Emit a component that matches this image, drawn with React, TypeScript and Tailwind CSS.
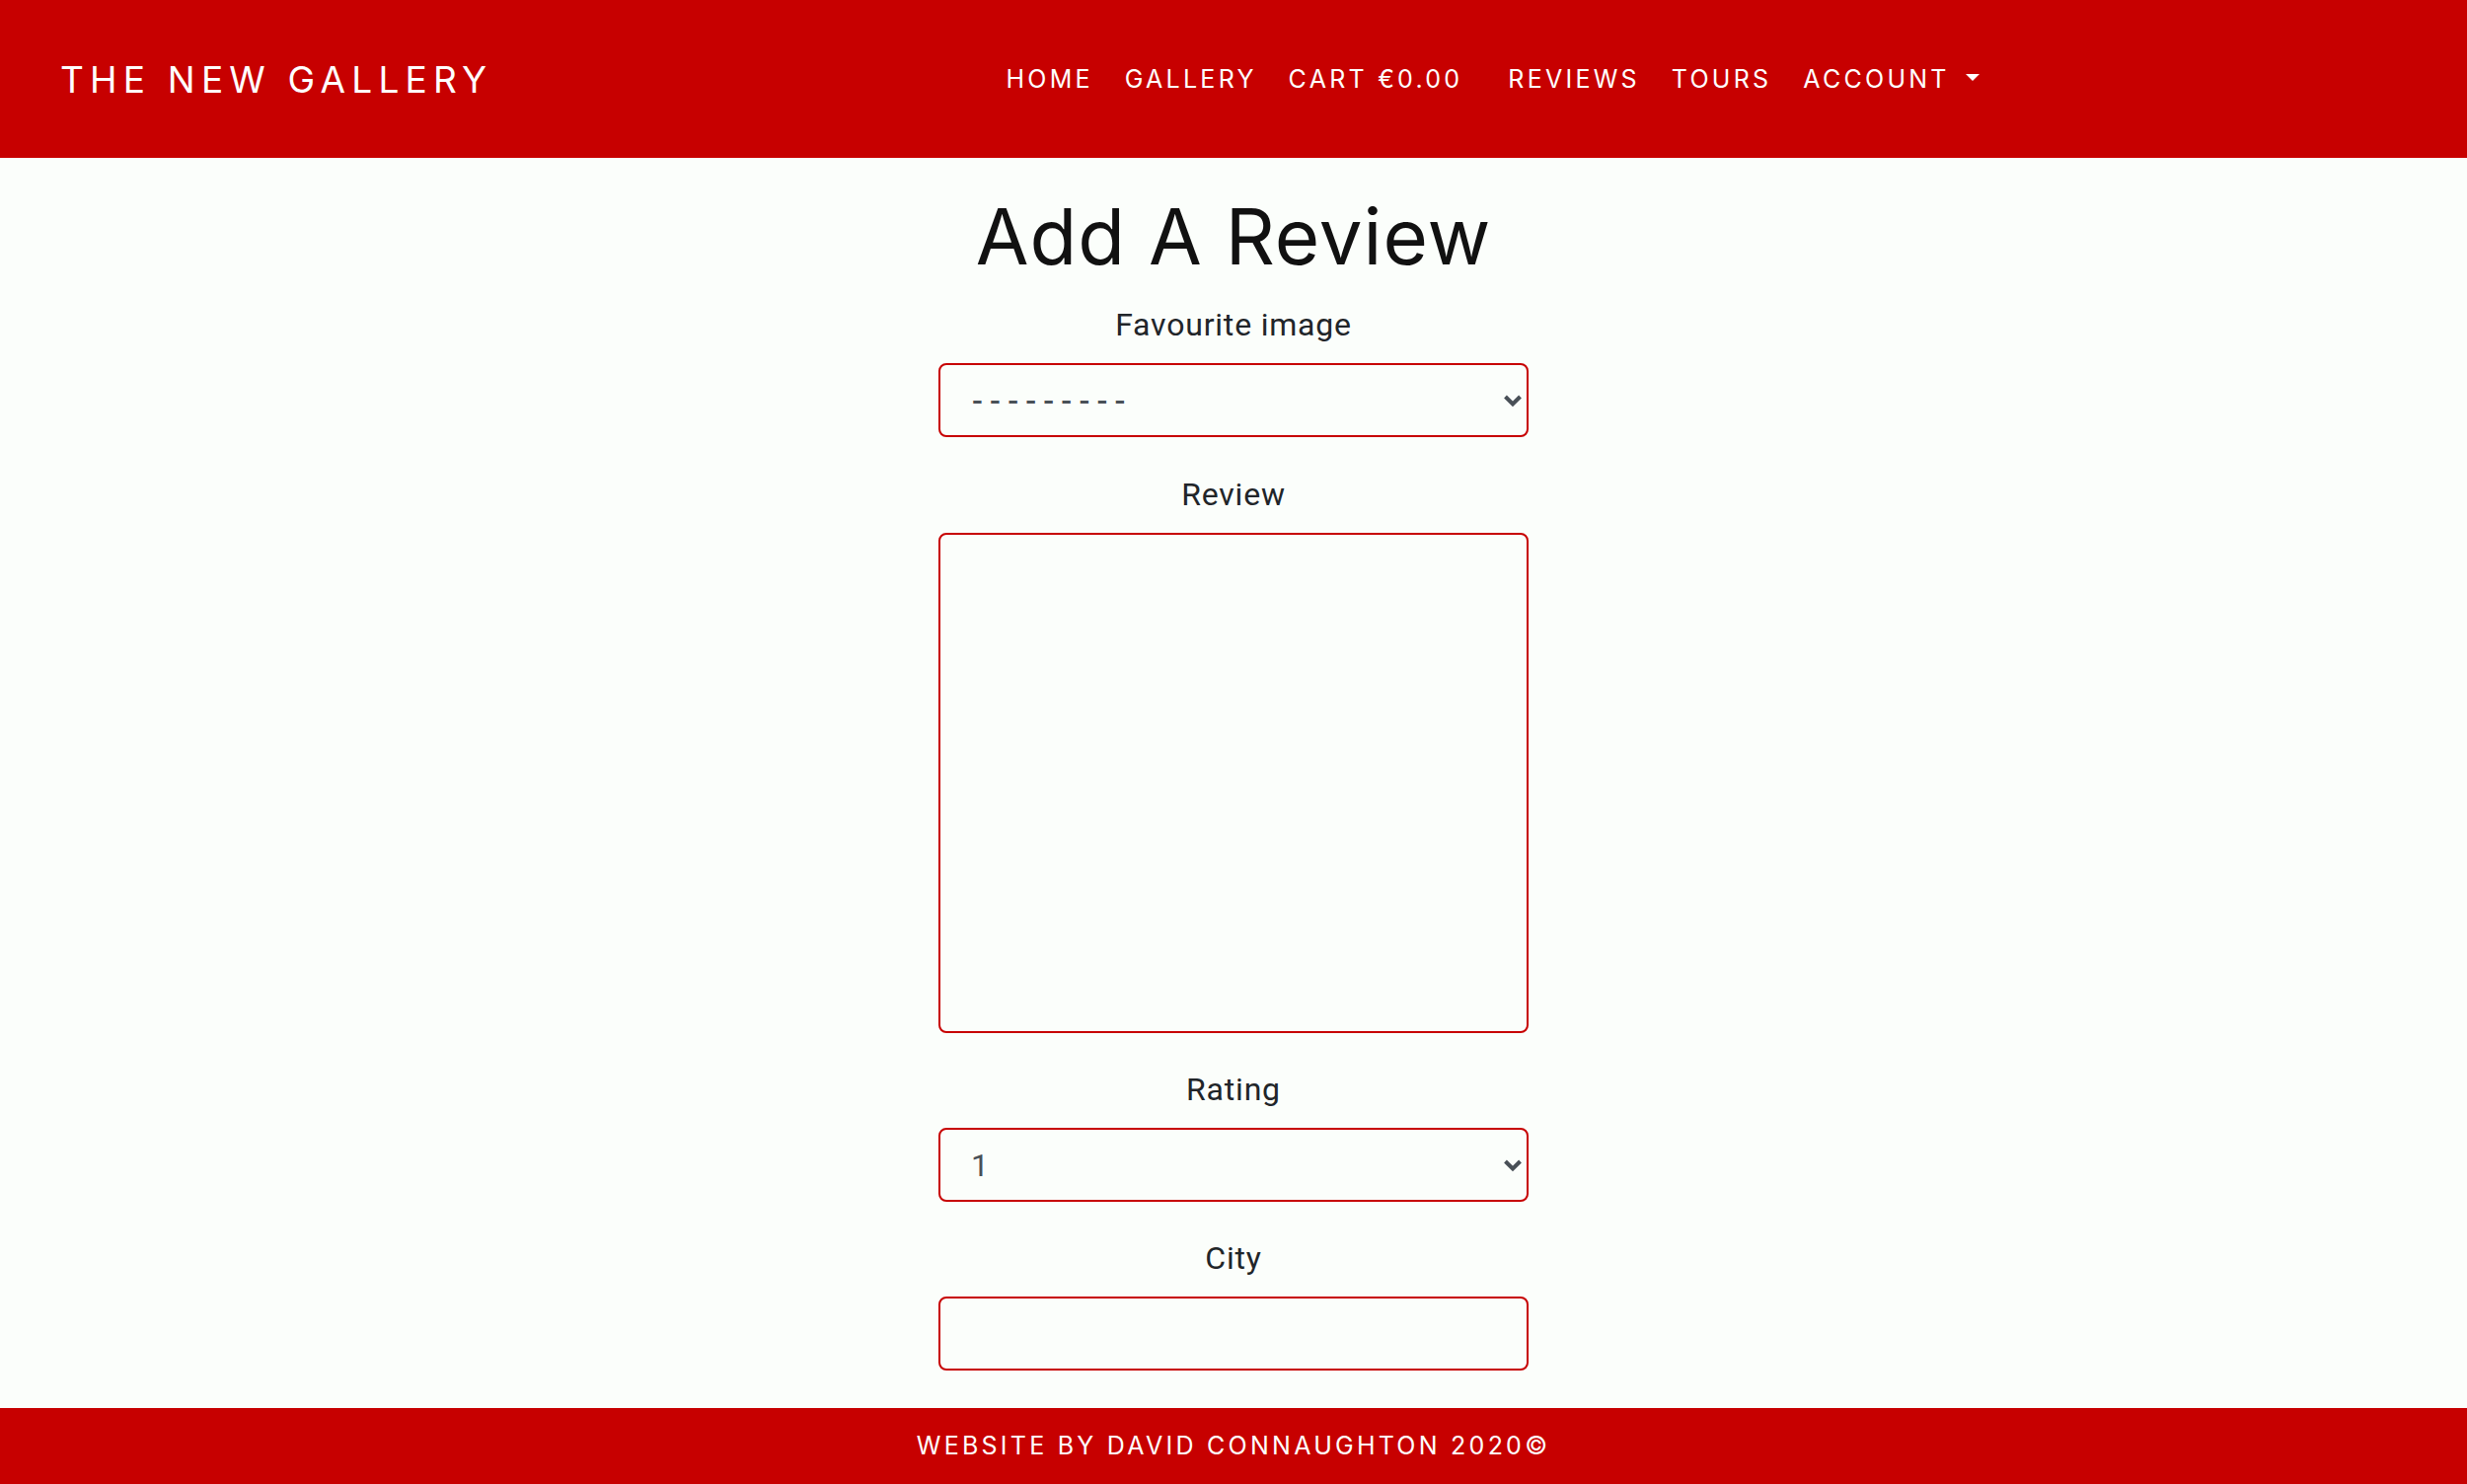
import React from "react";

const Chevron = () => (
  <svg
    className="pointer-events-none absolute right-[6px] top-1/2 -translate-y-1/2"
    width="20"
    height="14"
    viewBox="0 0 20 14"
  >
    <path d="M2.5 3 L10 10.5 L17.5 3" fill="none" stroke="#495057" strokeWidth="4" strokeLinecap="butt" strokeLinejoin="miter" />
  </svg>
);

const navItems = ["HOME", "GALLERY", "CART €0.00", "REVIEWS", "TOURS"];

export default function App() {
  return (
    <div className="flex h-[1504px] flex-col overflow-hidden bg-[#fbfefb] font-['Roboto',sans-serif]">
      <header className="flex h-[160px] shrink-0 items-center bg-[#c70000] pl-[61px] text-white">
        <div className="font-['Inter',sans-serif] text-[37px] leading-none tracking-[6.2px] whitespace-nowrap">
          THE NEW GALLERY
        </div>
        <nav className="ml-[504px] flex items-center font-['Inter',sans-serif] text-[25px] leading-none tracking-[3.25px]">
          {navItems.map((n) => (
            <a
              key={n}
              className={
                n === "CART €0.00"
                  ? "whitespace-nowrap pl-[16px] pr-[30px]"
                  : "whitespace-nowrap px-[16px]"
              }
            >
              {n}
            </a>
          ))}
          <a className="flex items-center whitespace-nowrap px-[16px]">
            ACCOUNT
            <span className="ml-[16px] mb-[4px] inline-block h-0 w-0 border-x-[7px] border-t-[7px] border-x-transparent border-t-white" />
          </a>
        </nav>
      </header>

      <main className="flex flex-1 flex-col items-center">
        <h1 className="mt-[36px] h-[88px] font-['Inter',sans-serif] text-[78px] font-normal leading-[88px] tracking-[1px] text-[#111111]">
          Add A Review
        </h1>
        <form className="mt-[21px] flex w-[598px] flex-col">
          <label className="mb-[15px] text-center text-[32px] leading-[48px] tracking-[0.8px] text-[#212529]">
            Favourite image
          </label>
          <div className="relative mb-[34px]">
            <select className="h-[75px] w-full appearance-none rounded-[8px] border-2 border-[#c70000] bg-[#fbfefb] px-[32px] text-[32px] font-medium tracking-[7.2px] text-[#495057] outline-none">
              <option>---------</option>
            </select>
            <Chevron />
          </div>

          <label className="mb-[15px] text-center text-[32px] leading-[48px] tracking-[0.8px] text-[#212529]">
            Review
          </label>
          <textarea className="mb-[33px] h-[507px] w-full resize-none rounded-[8px] border-2 border-[#c70000] bg-[#fbfefb] px-[32px] py-[12px] text-[32px] text-[#495057] outline-none" />

          <label className="mb-[15px] text-center text-[32px] leading-[48px] tracking-[0.8px] text-[#212529]">
            Rating
          </label>
          <div className="relative mb-[33px]">
            <select className="h-[75px] w-full appearance-none rounded-[8px] border-2 border-[#c70000] bg-[#fbfefb] px-[31px] text-[32px] text-[#495057] outline-none">
              <option>1</option>
              <option>2</option>
              <option>3</option>
              <option>4</option>
              <option>5</option>
            </select>
            <Chevron />
          </div>

          <label className="mb-[15px] text-center text-[32px] leading-[48px] tracking-[0.8px] text-[#212529]">
            City
          </label>
          <input className="h-[75px] w-full rounded-[8px] border-2 border-[#c70000] bg-[#fbfefb] px-[32px] text-[32px] text-[#495057] outline-none" />
        </form>
      </main>

      <footer className="flex h-[77px] shrink-0 items-center justify-center bg-[#c70000] font-['Inter',sans-serif] text-[25px] leading-none tracking-[3.25px] text-white">
        WEBSITE BY DAVID CONNAUGHTON 2020©
      </footer>
    </div>
  );
}
